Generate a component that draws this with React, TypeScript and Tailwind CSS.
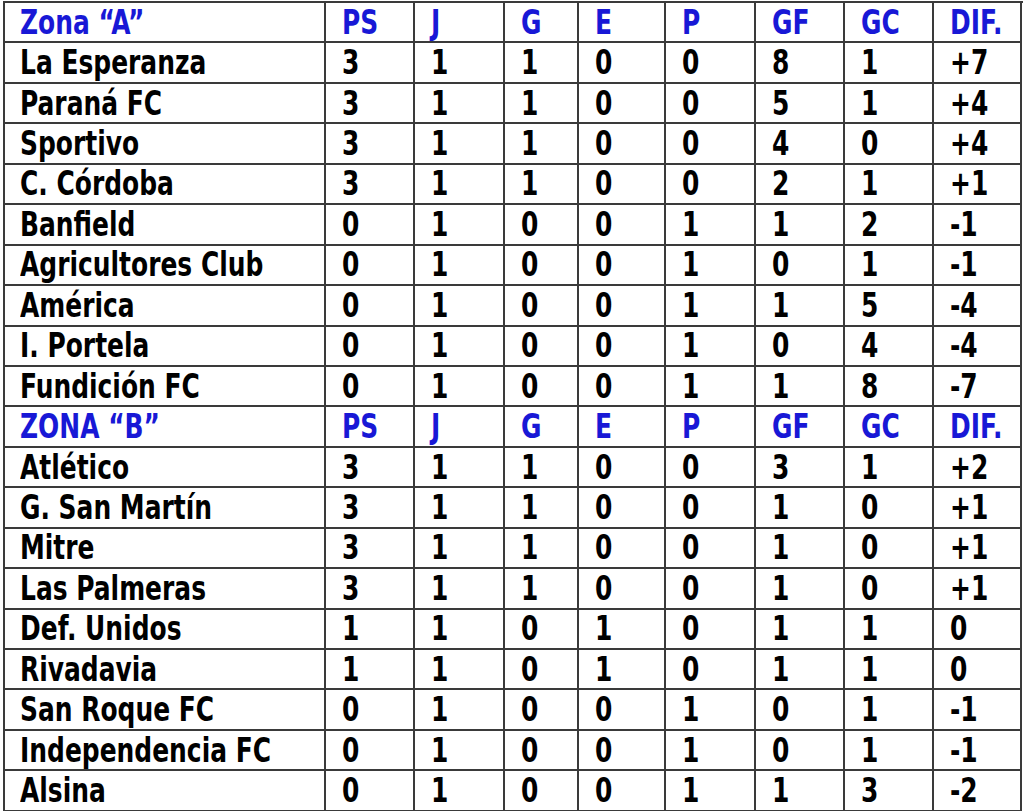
type Row = [string, ...(string | number)[]];

const HEAD = ["PS", "J", "G", "E", "P", "GF", "GC", "DIF."];

const zonaA: Row[] = [
  ["La Esperanza", 3, 1, 1, 0, 0, 8, 1, "+7"],
  ["Paraná FC", 3, 1, 1, 0, 0, 5, 1, "+4"],
  ["Sportivo", 3, 1, 1, 0, 0, 4, 0, "+4"],
  ["C. Córdoba", 3, 1, 1, 0, 0, 2, 1, "+1"],
  ["Banfield", 0, 1, 0, 0, 1, 1, 2, "-1"],
  ["Agricultores Club", 0, 1, 0, 0, 1, 0, 1, "-1"],
  ["América", 0, 1, 0, 0, 1, 1, 5, "-4"],
  ["I. Portela", 0, 1, 0, 0, 1, 0, 4, "-4"],
  ["Fundición FC", 0, 1, 0, 0, 1, 1, 8, "-7"],
];

const zonaB: Row[] = [
  ["Atlético", 3, 1, 1, 0, 0, 3, 1, "+2"],
  ["G. San Martín", 3, 1, 1, 0, 0, 1, 0, "+1"],
  ["Mitre", 3, 1, 1, 0, 0, 1, 0, "+1"],
  ["Las Palmeras", 3, 1, 1, 0, 0, 1, 0, "+1"],
  ["Def. Unidos", 1, 1, 0, 1, 0, 1, 1, "0"],
  ["Rivadavia", 1, 1, 0, 1, 0, 1, 1, "0"],
  ["San Roque FC", 0, 1, 0, 0, 1, 0, 1, "-1"],
  ["Independencia FC", 0, 1, 0, 0, 1, 0, 1, "-1"],
  ["Alsina", 0, 1, 0, 0, 1, 1, 3, "-2"],
];

function Cells({ row, blue }: { row: Row; blue?: boolean }) {
  return (
    <>
      {row.map((v, i) => (
        <div
          key={i}
          className={`flex h-[40.45px] items-center border-r-2 border-b-2 border-[#3a3a3a] ${
            i === 0 ? "pl-[15px]" : "pl-[16px]"
          } ${blue ? "text-[#1818d6]" : "text-black"}`}
        >
          <span className="inline-block origin-left scale-x-[0.84] whitespace-nowrap">{v}</span>
        </div>
      ))}
    </>
  );
}

export default function App() {
  return (
    <div className="min-h-[811px] w-[1024px] overflow-hidden bg-white">
      <div
        className="ml-[3px] mt-px grid w-[1020px] grid-cols-[321px_89px_90px_74px_87px_90px_89px_89px_88px] border-t-2 border-l-2 border-[#3a3a3a] text-[33px] leading-none font-bold"
        style={{ fontFamily: '"Liberation Sans Narrow", "DejaVu Sans Condensed", "Liberation Sans", sans-serif' }}
      >
        <Cells row={["Zona “A”", ...HEAD]} blue />
        {zonaA.map((r) => (
          <Cells key={r[0]} row={r} />
        ))}
        <Cells row={["ZONA “B”", ...HEAD]} blue />
        {zonaB.map((r) => (
          <Cells key={r[0]} row={r} />
        ))}
      </div>
    </div>
  );
}
